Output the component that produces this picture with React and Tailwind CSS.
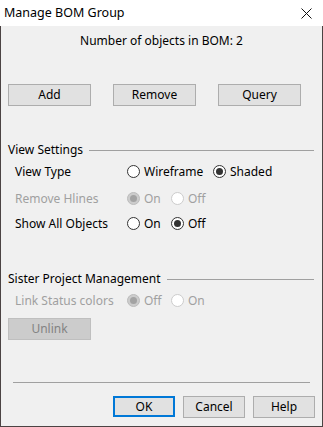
import React from 'react'

const font = { fontFamily: '"Noto Sans", "Open Sans", sans-serif' }

function Radio({ checked, disabled }) {
  const ring = disabled ? 'border-[#bcbcbc] bg-[#f0f0f0]' : 'border-[#333333] bg-white'
  const fill = disabled ? (checked ? 'bg-[#cccccc] border-[#bcbcbc]' : 'bg-white border-[#cccccc]') : ring
  return (
    <span className={`w-[13px] h-[13px] rounded-full border flex items-center justify-center shrink-0 ${fill}`}>
      {checked && (
        <span className={`w-[7px] h-[7px] rounded-full ${disabled ? 'bg-[#a3a3a3]' : 'bg-[#333333]'}`} />
      )}
    </span>
  )
}

function Option({ label, checked, disabled, width }) {
  return (
    <div className={`flex items-center gap-[4px] ${width}`}>
      <Radio checked={checked} disabled={disabled} />
      <span className={disabled ? 'text-[#a0a0a0]' : 'text-black'}>{label}</span>
    </div>
  )
}

function Row({ label, disabled, children, className = '' }) {
  return (
    <div className={`flex items-center h-[25px] ${className}`}>
      <span className={`w-[112px] pl-[14px] box-content ${disabled ? 'text-[#a0a0a0]' : 'text-black'}`}>{label}</span>
      <div className="flex items-center">{children}</div>
    </div>
  )
}

function Btn({ children, className = '', disabled }) {
  return (
    <button
      className={`h-[22px] border flex items-center justify-center ${
        disabled ? 'bg-[#cccccc] border-[#bfbfbf] text-[#838383]' : 'bg-[#e1e1e1] border-[#adadad] text-black'
      } ${className}`}
    >
      {children}
    </button>
  )
}

function GroupTitle({ children, className = '' }) {
  return (
    <div className={`flex items-center pl-[7px] pr-[8px] ${className}`}>
      <span className="pr-[6px]">{children}</span>
      <div className="flex-1 h-px bg-[#a0a0a0]" />
    </div>
  )
}

export default function App() {
  return (
    <div className="w-[323px] h-[427px] flex flex-col text-[12px] leading-[16px] text-black bg-[#f0f0f0]" style={font}>
      {/* Title bar */}
      <div className="h-[26px] bg-white flex items-center justify-between pl-[4px] pr-[11px] shrink-0">
        <span className="text-[12.5px]">Manage BOM Group</span>
        <svg width="11" height="11" viewBox="0 0 11 11">
          <path d="M0.5 0.5 L10.5 10.5 M10.5 0.5 L0.5 10.5" stroke="#111" strokeWidth="1" />
        </svg>
      </div>

      {/* Body */}
      <div className="flex-1 flex flex-col border-x border-b border-[#4b4343]">
        <div className="text-center mt-[7px]">Number of objects in BOM: 2</div>

        <div className="flex pl-[7px] mt-[35px] gap-[22px]">
          <Btn className="w-[83px]">Add</Btn>
          <Btn className="w-[83px]">Remove</Btn>
          <Btn className="w-[83px]">Query</Btn>
        </div>

        <GroupTitle className="mt-[36px]">View Settings</GroupTitle>
        <Row label="View Type" className="mt-[1px]">
          <Option label="Wireframe" checked={false} width="w-[86px]" />
          <Option label="Shaded" checked />
        </Row>
        <Row label="Remove Hlines" disabled className="mt-[2px]">
          <Option label="On" checked disabled width="w-[44px]" />
          <Option label="Off" disabled />
        </Row>
        <Row label="Show All Objects">
          <Option label="On" width="w-[44px]" />
          <Option label="Off" checked />
        </Row>

        <GroupTitle className="mt-[35px]">Sister Project Management</GroupTitle>
        <Row label="Link Status colors" disabled className="mt-[1px]">
          <Option label="Off" checked disabled width="w-[44px]" />
          <Option label="On" disabled />
        </Row>
        <div className="pl-[7px] mt-[5px]">
          <Btn disabled className="w-[83px]">Unlink</Btn>
        </div>

        <div className="mx-[12px] mt-[42px] h-px bg-[#a0a0a0]" />

        <div className="flex justify-end gap-[8px] pr-[7px] mt-[13px]">
          <button className="w-[62px] h-[21px] border-2 border-[#0078d7] bg-[#e1e1e1] flex items-center justify-center">OK</button>
          <Btn className="w-[62px] h-[21px]">Cancel</Btn>
          <Btn className="w-[62px] h-[21px]">Help</Btn>
        </div>
      </div>
    </div>
  )
}
